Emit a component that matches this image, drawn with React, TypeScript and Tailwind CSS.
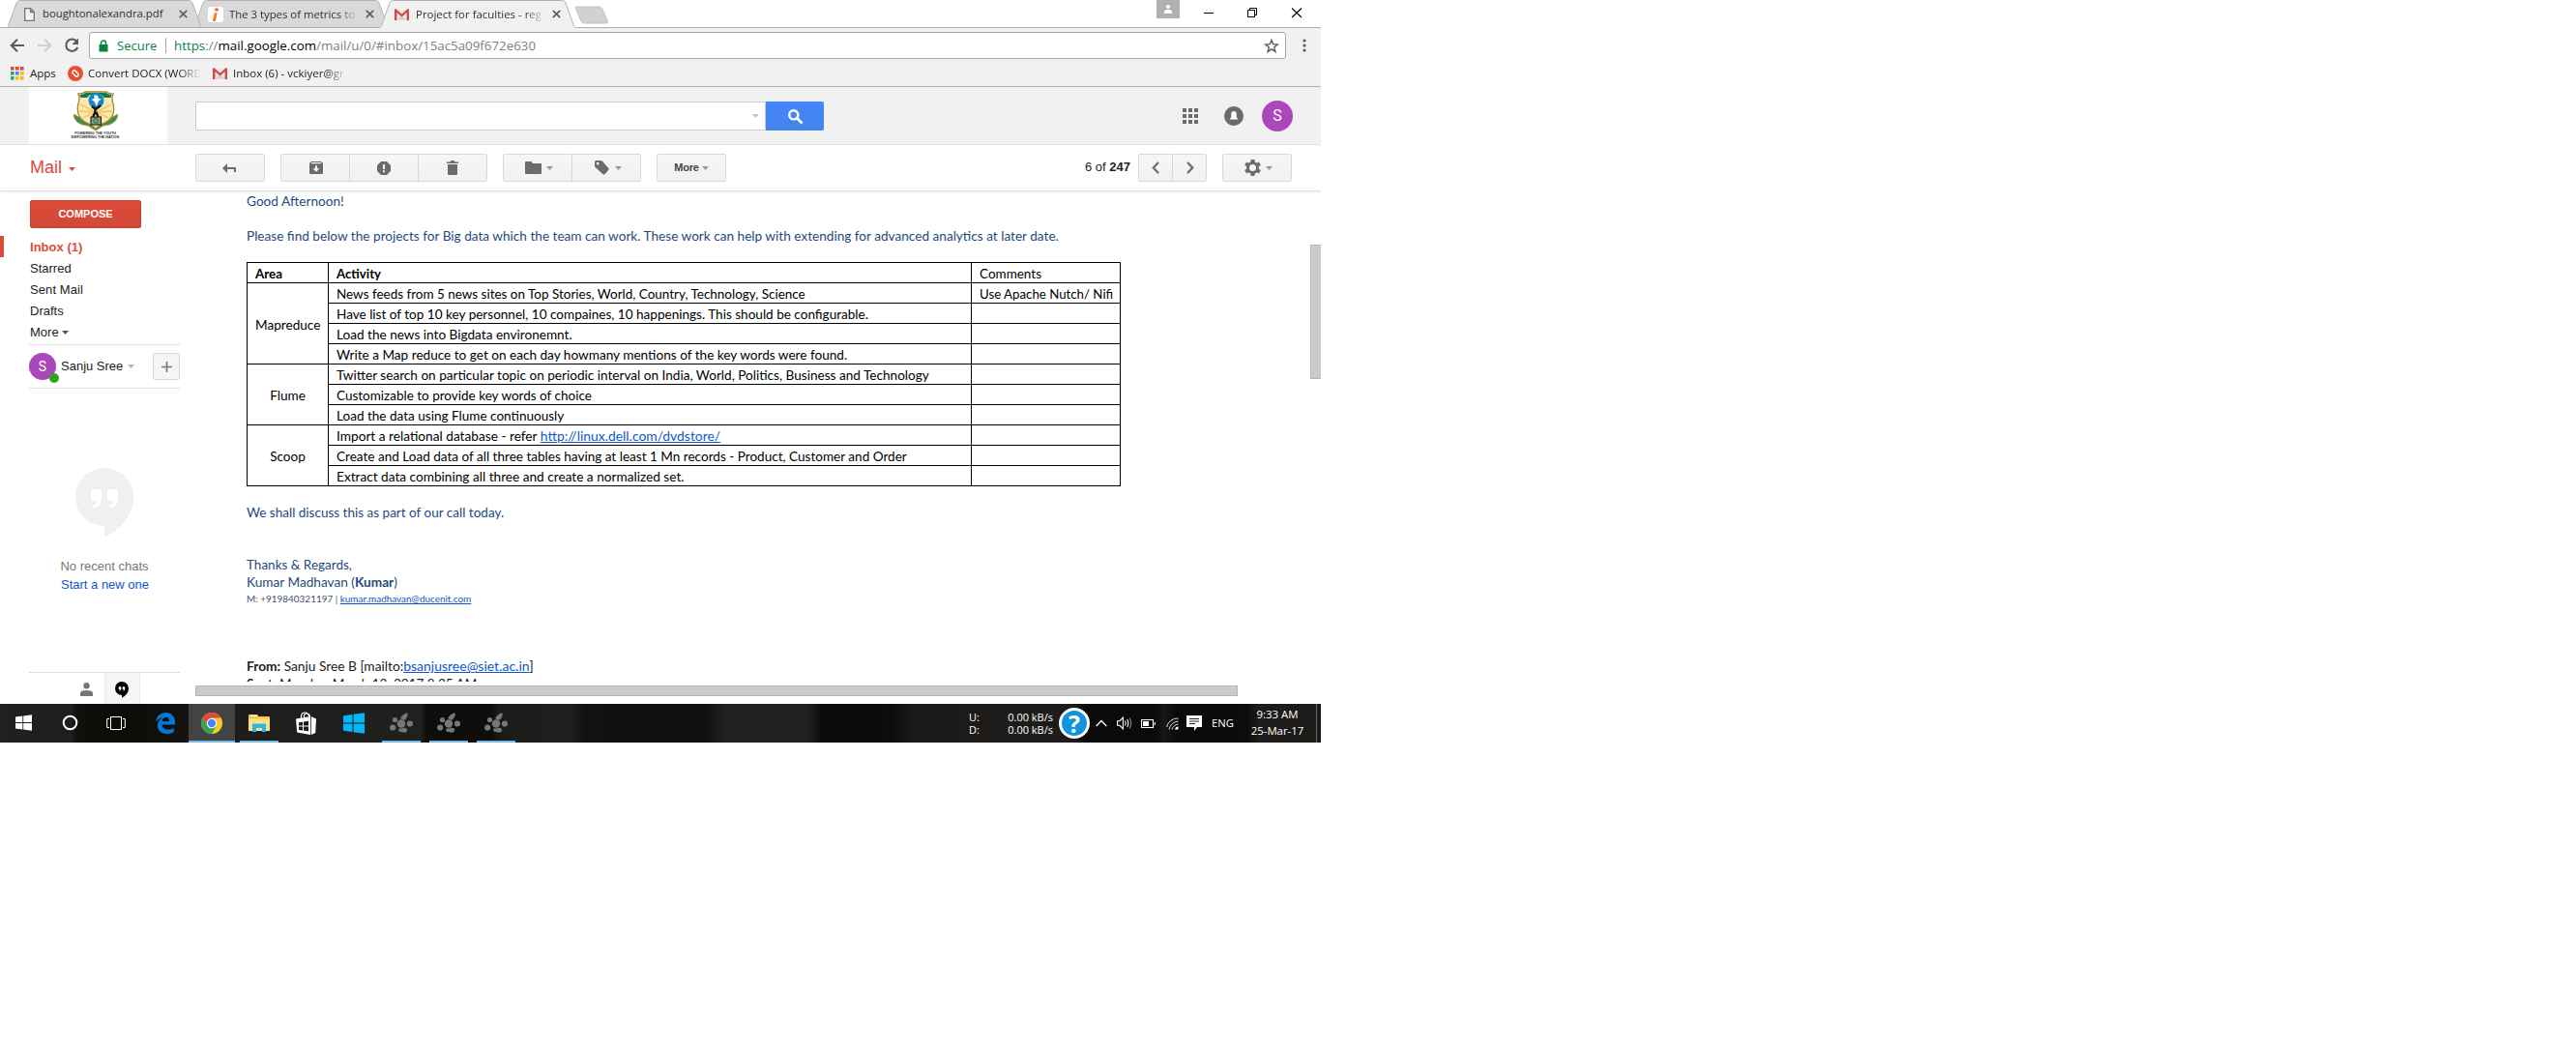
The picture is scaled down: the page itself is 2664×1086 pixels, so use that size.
import type { ReactNode } from "react";

const UI = "font-['Open_Sans',sans-serif]";

/* ---------- Browser chrome ---------- */

function GmailMark() {
  return (
    <svg width="15" height="12" viewBox="0 0 15 12">
      <rect x="0.5" y="0.5" width="14" height="11" fill="#e9e9e9" />
      <path d="M3 11.5 7.5 7 12 11.5z" fill="#d0d0d0" />
      <path d="M0 12V1.2Q0 0 1.2 0L7.5 5.5 13.8 0Q15 0 15 1.2V12H12.6V4L7.5 8.4 2.4 4V12z" fill="#d54b3d" />
    </svg>
  );
}

function Tab({ title, icon, active, className, size }: { title: string; icon: ReactNode; active?: boolean; className: string; size: string }) {
  return (
    <div className={`relative h-[29px] w-[206px] shrink-0 ${className}`}>
      <svg className="absolute inset-0" width="206" height="29" viewBox="0 0 206 29">
        <path
          d="M0 29C2 29 3 28 3.6 26.500L12 3Q13 .5 15.500 .5H190.500Q193 .5 194 3L202.400 26.500C203 28 204 29 206 29"
          fill={active ? "#f1f1f1" : "#d9d9d9"}
          stroke="#b3b3b3"
        />
        {!active && <path d="M0 28.500H206" stroke="#b0b0b0" />}
      </svg>
      <div className="relative flex h-[29px] items-center pl-[17px]">
        <div className="flex w-[22px] items-center">{icon}</div>
        <div className={`${UI} ${size} w-[133px] whitespace-nowrap text-[#303030] [mask-image:linear-gradient(to_right,#000_85%,transparent)]`}>
          {title}
        </div>
        <svg className="ml-[8px]" width="9" height="9" viewBox="0 0 9 9">
          <path d="M.8.8 8.200 8.200M8.200.8.8 8.200" stroke="#5f5f5f" strokeWidth="1.700" />
        </svg>
      </div>
    </div>
  );
}

function TabStrip() {
  return (
    <div className="relative flex h-[29px] items-start border-b border-[#b0b0b0] bg-white pl-[5px]">
      <Tab
        title="boughtonalexandra.pdf"
        size="text-[11.3px]"
        className="z-20 [&_div]:[mask-image:none]"
        icon={
          <svg className="ml-[3px]" width="11" height="14" viewBox="0 0 11 14">
            <path d="M.7.700H6.500L10.300 4.500V13.300H.7zM6.500.7V4.500H10.300" fill="#f4f4f4" stroke="#757575" strokeWidth="1.300" />
          </svg>
        }
      />
      <Tab
        title="The 3 types of metrics to"
        size="text-[11.35px]"
        className="z-10 -ml-[13px]"
        icon={
          <svg width="16" height="16" viewBox="0 0 16 16">
            <rect width="16" height="16" rx="3" fill="#fff" />
            <path d="M6.700 6.200H9.600L7.800 15H4.900z" fill="#f47b20" />
            <path d="M9 .8V5M6.900 2 11 3.900M11 1.900 7 3.900" stroke="#f05a28" strokeWidth="1" />
          </svg>
        }
      />
      <Tab title="Project for faculties - reg" size="text-[11.45px]" className="z-30 -ml-[13px]" active icon={<GmailMark />} />
      <svg className="-ml-[3px] mt-[6px]" width="36" height="20" viewBox="0 0 36 20">
        <path d="M1.500 3Q.8 1 3 1H25.500Q28 1 28.800 3L34.500 16Q35 18 33 18H10.500Q8 18 7 16z" fill="#d1d1d1" stroke="#c2c2c2" />
      </svg>
      <div className="ml-auto flex">
        <div className="flex h-[19px] w-[24px] items-center justify-center bg-[#b1b1b1]">
          <svg width="8" height="9" viewBox="0 0 8 9">
            <circle cx="4" cy="2" r="2" fill="#fff" />
            <path d="M0 9V7Q0 5 4 5T8 7V9z" fill="#fff" />
          </svg>
        </div>
        <svg className="mt-[7px] mr-[19px] ml-[25px]" width="102" height="12" viewBox="0 0 102 12">
          <path d="M0 6.500H10" stroke="#000" />
          <path d="M45.500 3.500H52.500V10.500H45.500zM47.500 3.500V1.500H54.500V8.500H52.500" fill="none" stroke="#000" />
          <path d="M91 1.500 101 11M101 1.500 91 11" stroke="#000" strokeWidth="1.100" />
        </svg>
      </div>
    </div>
  );
}

function AddressBar() {
  return (
    <div className="flex h-[34px] items-center pt-[2px] pl-[10px]">
      <svg width="17" height="16" viewBox="0 0 17 16">
        <path d="M15 8H2M8 1.700 1.700 8 8 14.300" fill="none" stroke="#5a5a5a" strokeWidth="2" />
      </svg>
      <svg className="ml-[12px]" width="16" height="16" viewBox="0 0 16 16">
        <path d="M0 8H13M7 1.700 13.300 8 7 14.300" fill="none" stroke="#cfcfcf" strokeWidth="2" />
      </svg>
      <svg className="ml-[11px]" width="17" height="16" viewBox="0 0 17 16">
        <path d="M13.500 4A6.200 6.200 0 1 0 14.300 10" fill="none" stroke="#5a5a5a" strokeWidth="2.100" />
        <path d="M15 .5V7H8.500z" fill="#5a5a5a" />
      </svg>
      <div className="ml-[9px] flex h-[28px] w-[1238px] items-center rounded-[3px] border border-[#a9a9a9] bg-white pl-[9px]">
        <svg width="10" height="13" viewBox="0 0 10 13">
          <path d="M2.500 6V3.500A2.500 2.500 0 0 1 7.500 3.500V6" fill="none" stroke="#0b8043" strokeWidth="1.500" />
          <rect x=".5" y="5" width="9" height="7.500" rx=".6" fill="#0b8043" />
        </svg>
        <div className={`${UI} ml-[9px] w-[50px] text-[13px] leading-[26px] text-[#0b8043]`}>Secure</div>
        <div className="h-[16px] w-px bg-[#a8a8a8]" />
        <div className={`${UI} ml-[8px] text-[13.33px] leading-[26px] whitespace-nowrap text-[#808080]`}>
          <span className="text-[#0b8043]">https</span>://<span className="text-black">mail.google.com</span>/mail/u/0/#inbox/15ac5a09f672e630
        </div>
        <svg className="mr-[6px] ml-auto" width="16" height="15" viewBox="0 0 16 15">
          <path d="M8 1.500 9.700 5.700 14.200 6 10.700 8.900 11.900 13.400 8 10.900 4.100 13.400 5.300 8.900 1.800 6 6.300 5.700z" fill="none" stroke="#5a5a5a" strokeWidth="1.400" />
        </svg>
      </div>
      <svg className="ml-[17px]" width="4" height="14" viewBox="0 0 4 14">
        <circle cx="2" cy="2" r="1.600" fill="#5a5a5a" />
        <circle cx="2" cy="7" r="1.600" fill="#5a5a5a" />
        <circle cx="2" cy="12" r="1.600" fill="#5a5a5a" />
      </svg>
    </div>
  );
}

const APP_DOTS = ["#ea4335", "#ea4335", "#ea4335", "#34a853", "#4285f4", "#fbbc05", "#34a853", "#fbbc05", "#fbbc05"];

function Bookmarks() {
  return (
    <div className={`${UI} flex h-[27px] items-center border-b border-[#b4b4b4] pb-[1px] pl-[11px] text-[11.5px] whitespace-nowrap text-[#222]`}>
      <svg width="14" height="14" viewBox="0 0 14 14">
        {APP_DOTS.map((c, i) => (
          <rect key={i} x={(i % 3) * 5} y={Math.floor(i / 3) * 5} width="3.600" height="3.600" fill={c} />
        ))}
      </svg>
      <span className="ml-[6px] w-[39px]">Apps</span>
      <svg width="16" height="16" viewBox="0 0 16 16">
        <circle cx="8" cy="8" r="8" fill="#e8502f" />
        <path d="M7.300 9.800 5.200 7.800Q4.300 6.500 5.500 5.300 6.800 4.300 8 5.300L9 6.300M8.700 6.200 10.800 8.200Q11.700 9.500 10.500 10.700 9.200 11.700 8 10.700L7 9.700" fill="none" stroke="#fff" strokeWidth="1.500" />
      </svg>
      <span className="ml-[5px] w-[117px] text-[11.5px] [mask-image:linear-gradient(to_right,#000_80%,transparent)]">Convert DOCX (WORD</span>
      <span className="ml-[12px]">
        <GmailMark />
      </span>
      <span className="ml-[6px] w-[117px] [mask-image:linear-gradient(to_right,#000_83%,transparent)]">Inbox (6) - vckiyer@gr</span>
    </div>
  );
}

/* ---------- Gmail header and toolbar ---------- */

function Crest() {
  return (
    <svg width="48" height="42" viewBox="0 0 48 42">
      <path d="M1 24Q2 35 16 36L24 41 32 36Q46 35 47 24L41 27H7z" fill="#3f8f4a" stroke="#b9973c" strokeWidth=".8" />
      <path d="M6 3Q11 3 13 1H35Q37 3 42 3 40 8 42 13 45 26 35 32 28 35 24 39 20 35 13 32 3 26 6 13 8 8 6 3z" fill="#fbe9b4" stroke="#a58a35" strokeWidth="1.300" />
      <path d="M7.500 4Q11.500 4 13.500 2H34.500Q36.500 4 40.500 4L39.500 7H33L30 4H18L15 7H8.500z" fill="#157a4b" />
      <path d="M24 22 8 14M24 22 7 21M24 22 10 28M24 22 40 14M24 22 41 21M24 22 38 28" stroke="#f7c765" strokeWidth="1.800" />
      <circle cx="24.500" cy="10" r="8" fill="#1388cf" />
      <path d="M22.500 4 26 5 27 8 30 8.500 27 10.500 25 16 22.500 11 19.500 9 22.500 8z" fill="#fff" />
      <path d="M20 16 24 19 29 15M24 18 23 23 21 27M24.500 22 26.500 27" fill="none" stroke="#111" strokeWidth="2.300" />
      <rect x="19" y="27" width="10.500" height="8" fill="#8c9a86" stroke="#1a1a1a" strokeWidth="1.100" />
      <circle cx="24.200" cy="31" r="2.300" fill="none" stroke="#206b35" />
    </svg>
  );
}

function Header() {
  return (
    <div className="flex h-[60px] items-start border-b border-[#e2e2e2] bg-[#f1f1f1]">
      <div className="ml-[30px] flex h-[59px] w-[143px] flex-col items-center bg-white pt-[4px] pr-[6px]">
        <Crest />
        <div className="w-[80px] text-center font-['Liberation_Sans'] text-[3.7px] leading-[4px] font-bold text-[#333]">
          POWERING THE YOUTH
          <br />
          EMPOWERING THE NATION
        </div>
      </div>
      <div className="mt-[15px] ml-[29px] flex h-[30px] w-[590px] items-center justify-end border border-[#cbcbcb] bg-white pr-[6px]">
        <Caret className="text-[#c3c3c3]" />
      </div>
      <div className="mt-[15px] flex h-[30px] w-[60px] items-center justify-center rounded-r-[2px] bg-[linear-gradient(#4387fd,#4683ea)]">
        <svg width="17" height="17" viewBox="0 0 17 17">
          <circle cx="6.800" cy="6.800" r="4.600" fill="none" stroke="#fff" strokeWidth="2.400" />
          <path d="M10 10 15.500 15.500" stroke="#fff" strokeWidth="2.800" />
        </svg>
      </div>
      <div className="mt-[14px] ml-auto flex h-[32px] items-center pr-[29px]">
        <svg width="16" height="16" viewBox="0 0 16 16" fill="#6b6b6b">
          {[0, 6, 12].map((y) => [0, 6, 12].map((x) => <rect key={`${x}-${y}`} x={x} y={y} width="4" height="4" />))}
        </svg>
        <svg className="ml-[27px]" width="20" height="20" viewBox="0 0 20 20">
          <circle cx="10" cy="10" r="10" fill="#6b6b6b" />
          <path d="M10 5Q7.200 5.300 7.200 8.500V11.500L5.800 13V13.500H14.200V13L12.800 11.500V8.500Q12.800 5.300 10 5z" fill="#fff" />
        </svg>
        <div className="ml-[19px] flex size-[32px] items-center justify-center rounded-full bg-[#ab47bc] font-['Roboto'] text-[16px] text-white">S</div>
      </div>
    </div>
  );
}

function Caret({ className = "" }: { className?: string }) {
  return (
    <svg className={className} width="7" height="4" viewBox="0 0 7 4">
      <path d="M0 0H7L3.500 4z" fill="currentColor" />
    </svg>
  );
}

const BTN = "flex h-[29px] items-center justify-center border border-[#d9d9d9] bg-[linear-gradient(#f6f6f6,#f1f1f1)] text-[#6b6b6b]";

function Toolbar() {
  return (
    <div className="relative z-10 flex h-[48px] items-start border-b border-[#dedede] bg-white pt-[9px] font-['Liberation_Sans',sans-serif] shadow-[0_1px_2px_rgba(0,0,0,0.06)]">
      <div className="ml-[31px] flex h-[29px] w-[171px] items-center text-[18px] text-[#dd4b39]">
        Mail
        <Caret className="mt-[2px] ml-[7px]" />
      </div>
      <div className={`${BTN} w-[72px] rounded-[2px]`}>
        <svg className="mr-[2px]" width="14" height="10" viewBox="0 0 14 10">
          <path d="M5 0V4H14V9H12V6H5V10L0 5z" fill="currentColor" />
        </svg>
      </div>
      <div className={`${BTN} ml-[16px] w-[72px] rounded-l-[2px]`}>
        <svg className="ml-[2px]" width="14" height="13" viewBox="0 0 14 13">
          <path d="M2 0H12L14 2V12Q14 13 13 13H1Q0 13 0 12V2z" fill="currentColor" />
          <path d="M2 1.600H12M7 4.500V9" stroke="#f2f2f2" strokeWidth="1.200" />
          <path d="M6 4.500H8V7.300H10.500L7 10.700 3.500 7.300H6z" fill="#f4f4f4" />
        </svg>
      </div>
      <div className={`${BTN} -ml-px w-[72px]`}>
        <svg width="14" height="14" viewBox="0 0 14 14">
          <path d="M4.100 0H9.900L14 4.100V9.900L9.900 14H4.100L0 9.900V4.100z" fill="currentColor" />
          <path d="M7 3V8M7 9.300V11.300" stroke="#f4f4f4" strokeWidth="2" />
        </svg>
      </div>
      <div className={`${BTN} -ml-px w-[72px] rounded-r-[2px]`}>
        <svg width="12" height="15" viewBox="0 0 12 15">
          <path d="M0 1.500H3.500L4.500 0H7.500L8.500 1.500H12V3H0zM1 4H11V14Q11 15 10 15H2Q1 15 1 14z" fill="currentColor" />
        </svg>
      </div>
      <div className={`${BTN} ml-[16px] w-[72px] rounded-l-[2px]`}>
        <svg className="ml-[3px]" width="17" height="13" viewBox="0 0 17 13">
          <path d="M1 0H6.500L8 2H16Q17 2 17 3V12Q17 13 16 13H1Q0 13 0 12V1Q0 0 1 0z" fill="currentColor" />
        </svg>
        <Caret className="ml-[5px] text-[#999]" />
      </div>
      <div className={`${BTN} -ml-px w-[72px] rounded-r-[2px]`}>
        <svg className="ml-[3px]" width="15" height="15" viewBox="0 0 15 15">
          <path fillRule="evenodd" d="M0 1.500Q0 0 1.500 0H6.500L8 .7 14.300 8Q15 9 14.300 9.700L10.500 14.300Q9.500 15.200 8.600 14.300L.6 7Q0 6.300 0 5.500zM3.200 1.800A1.400 1.400 0 1 0 3.200 4.600 1.400 1.400 0 1 0 3.200 1.800z" fill="currentColor" />
        </svg>
        <Caret className="ml-[6px] text-[#999]" />
      </div>
      <div className={`${BTN} ml-[16px] w-[72px] rounded-[2px] text-[11px] font-bold`}>
        <span className="tracking-[-0.2px] text-[#444]">More</span>
        <Caret className="ml-[3px] text-[#999]" />
      </div>
      <div className="ml-auto flex">
        <div className="mr-[8px] text-[13px] leading-[27px] text-[#222]">
          6 of <b>247</b>
        </div>
        <div className={`${BTN} w-[36px] rounded-l-[2px]`}>
          <svg width="8" height="13" viewBox="0 0 8 13">
            <path d="M7 1 1.700 6.500 7 12" fill="none" stroke="currentColor" strokeWidth="2.200" />
          </svg>
        </div>
        <div className={`${BTN} -ml-px w-[36px] rounded-r-[2px]`}>
          <svg className="ml-[1px]" width="8" height="13" viewBox="0 0 8 13">
            <path d="M1 1 6.300 6.500 1 12" fill="none" stroke="currentColor" strokeWidth="2.200" />
          </svg>
        </div>
        <div className={`${BTN} mr-[30px] ml-[16px] w-[72px] rounded-[2px]`}>
          <svg className="ml-[2px]" width="17" height="17" viewBox="0 0 17 17">
            <circle cx="8.500" cy="8.500" r="5" fill="none" stroke="currentColor" strokeWidth="3" />
            {[0, 60, 120, 180, 240, 300].map((a) => (
              <rect key={a} x="6.500" y="0" width="4" height="3.500" fill="currentColor" transform={`rotate(${a} 8.500 8.500)`} />
            ))}
          </svg>
          <Caret className="ml-[5px] text-[#999]" />
        </div>
      </div>
    </div>
  );
}

/* ---------- Sidebar ---------- */

function Hangouts({ size, fill, quote }: { size: number; fill: string; quote: string }) {
  return (
    <svg width={size} height={size * 1.2} viewBox="0 0 60 72">
      <path d="M30 0A30 30 0 1 0 30 60V72Q60 56 60 30A30 30 0 0 0 30 0z" fill={fill} />
      <path d="M18 22H25Q27 22 27 24V32Q27 41 18 41V38Q22 38 22 34H18Q16 34 16 32V24Q16 22 18 22zM35 22H42Q44 22 44 24V32Q44 41 35 41V38Q39 38 39 34H35Q33 34 33 32V24Q33 22 35 22z" fill={quote} />
    </svg>
  );
}

function Sidebar() {
  return (
    <div className="flex h-[530px] w-[202px] shrink-0 flex-col font-['Liberation_Sans',sans-serif] text-[13px] text-[#222]">
      <div className="mt-[9px] ml-[31px] flex h-[29px] w-[115px] items-center justify-center rounded-[2px] border border-[#c9402f] bg-[linear-gradient(#dd4b39,#d14836)] text-[11px] font-bold text-white">
        COMPOSE
      </div>
      <div className="mt-[8px] flex h-[22px] items-center border-l-[4px] border-[#dd4b39] pt-[1px] pl-[27px] font-bold tracking-[0.020px] text-[#dd4b39]">Inbox (1)</div>
      <div className="mt-[1px] flex flex-col pl-[31px] leading-[22px]">
        <div>Starred</div>
        <div className="tracking-[0.090px]">Sent Mail</div>
        <div>Drafts</div>
        <div className="flex h-[21px] items-center leading-[21px]">
          More
          <Caret className="ml-[3px] text-[#555]" />
        </div>
      </div>
      <div className="mt-[2px] ml-[30px] flex h-[46px] w-[156px] items-center border-y border-[#e2e2e2]">
        <div className="relative flex size-[28px] items-center justify-center rounded-full bg-[#ab47bc] font-['Roboto'] text-[14px] text-white">
          S
          <div className="absolute -right-[3px] -bottom-[3px] size-[10px] rounded-full bg-[#2fa71c]" />
        </div>
        <span className="ml-[5px]">Sanju Sree</span>
        <Caret className="ml-[5px] text-[#b5b5b5]" />
        <div className="ml-auto flex size-[28px] items-center justify-center rounded-[2px] border border-[#d9d9d9] bg-[#f5f5f5]">
          <svg width="11" height="11" viewBox="0 0 11 11">
            <path d="M5.500 0V11M0 5.500H11" stroke="#777" strokeWidth="1.600" />
          </svg>
        </div>
      </div>
      <div className="mt-[82px] ml-[30px] flex w-[156px] flex-col items-center leading-[19px]">
        <Hangouts size={60} fill="#f0f0f0" quote="#fff" />
        <div className="mt-[20px] text-[#777]">No recent chats</div>
        <div className="ml-[1px] text-[#15c]">Start a new one</div>
      </div>
      <div className="mt-auto ml-[30px] flex h-[33px] w-[156px] border-t border-[#dedede]">
        <svg className="mt-[10px] ml-[53px]" width="13" height="14" viewBox="0 0 13 14">
          <circle cx="6.500" cy="3.300" r="3.200" fill="#777" />
          <path d="M0 14V11Q0 8 6.500 8T13 11V14z" fill="#777" />
        </svg>
        <div className="ml-[12px] flex w-[37px] justify-center border-x border-[#ebebeb] bg-[#f6f6f6] pt-[9px] pr-[1px]">
          <Hangouts size={14} fill="#000" quote="#fff" />
        </div>
      </div>
    </div>
  );
}

/* ---------- Message ---------- */

type Row = { area?: string; span?: number; text: ReactNode; note?: string; size?: string };

const ROWS: Row[] = [
  { area: "Mapreduce", span: 4, text: "News feeds from 5 news sites on Top Stories, World, Country, Technology, Science", note: "Use Apache Nutch/ Nifi", size: "text-[13.48px]" },
  { text: "Have list of top 10 key personnel, 10 compaines, 10 happenings. This should be configurable.", size: "text-[13.55px]" },
  { text: "Load the news into Bigdata environemnt.", size: "text-[13.6px]" },
  { text: "Write a Map reduce to get on each day howmany mentions of the key words were found.", size: "text-[13.6px]" },
  { area: "Flume", span: 3, text: "Twitter search on particular topic on periodic interval on India, World, Politics, Business and Technology", size: "text-[13.6px]" },
  { text: "Customizable to provide key words of choice", size: "text-[13.5px]" },
  { text: "Load the data using Flume continuously", size: "text-[13.55px]" },
  {
    area: "Scoop",
    span: 3,
    text: (
      <>
        Import a relational database - refer <a className="text-[13.9px] text-[#15c] underline">http://linux.dell.com/dvdstore/</a>
      </>
    ),
    size: "text-[13.68px]",
  },
  { text: "Create and Load data of all three tables having at least 1 Mn records - Product, Customer and Order", size: "text-[13.55px]" },
  { text: "Extract data combining all three and create a normalized set.", size: "text-[13.65px]" },
];

const CELL = "h-[21px] border border-black px-[8px] pt-[2px] pb-0 leading-[18px] whitespace-nowrap";

function Message() {
  return (
    <div className="h-[507px] w-[1153px] overflow-hidden pt-[1px] pl-[53px] font-['Lato',sans-serif] text-[13.5px] leading-[18px] text-[#1f497d]">
      <p className="text-[13.65px]">Good Afternoon!</p>
      <p className="mt-[18px] text-[13.61px] whitespace-nowrap">
        Please find below the projects for Big data which the team can work. These work can help with extending for advanced analytics at later date.
      </p>
      <table className="mt-[18px] w-[903px] table-fixed border-collapse text-black">
        <colgroup>
          <col className="w-[84px]" />
          <col className="w-[665px]" />
          <col className="w-[154px]" />
        </colgroup>
        <tbody>
          <tr>
            <td className={`${CELL} text-[13.35px] font-bold`}>Area</td>
            <td className={`${CELL} text-[13.2px] font-bold`}>Activity</td>
            <td className={CELL}>Comments</td>
          </tr>
          {ROWS.map((r, i) => (
            <tr key={i}>
              {r.area && (
                <td rowSpan={r.span} className={`${CELL} text-center text-[13.6px]`}>
                  {r.area}
                </td>
              )}
              <td className={`${CELL} ${r.size}`}>{r.text}</td>
              <td className={`${CELL} text-[13.25px]`}>{r.note}</td>
            </tr>
          ))}
        </tbody>
      </table>
      <p className="mt-[18px] text-[13.53px]">We shall discuss this as part of our call today.</p>
      <p className="mt-[36px]">Thanks &amp; Regards,</p>
      <p className="text-[13.65px]">
        Kumar Madhavan (<b>Kumar</b>)
      </p>
      <p className="text-[9.950px] leading-[16px] text-[#44546a]">
        M: +919840321197 | <a className="text-[#15c] underline">kumar.madhavan@ducenit.com</a>
      </p>
      <p className="mt-[53px] text-[13.75px] text-[#222]">
        <b>From:</b> Sanju Sree B [mailto:<a className="text-[14px] text-[#15c] underline">bsanjusree@siet.ac.in</a>]
      </p>
      <p className="text-[13.5px] text-[#222]">
        <b>Sent:</b> Monday, March 13, 2017 8:35 AM
      </p>
    </div>
  );
}

function Content() {
  return (
    <div className="flex h-[530px]">
      <Sidebar />
      <div className="flex w-[1153px] flex-col">
        <Message />
        <div className="mt-[4px] h-[11px] w-[1078px] border border-[#b5b5b5] bg-[#cbcbcb]" />
      </div>
      <div className="mt-[55px] h-[139px] w-[11px] border border-r-0 border-[#b5b5b5] bg-[#cbcbcb]" />
    </div>
  );
}

/* ---------- Windows taskbar ---------- */

function Slot({ children, line, active, wide }: { children: ReactNode; line?: boolean; active?: boolean; wide?: boolean }) {
  return (
    <div className={`flex h-[40px] flex-col items-center ${wide ? "w-[49px]" : "w-[48px]"} ${active ? "bg-[#434343]" : ""}`}>
      <div className="flex h-[38px] items-center pt-[1px]">{children}</div>
      {line && <div className={`h-[2px] bg-[#76b9ed] ${active ? "w-full" : "w-[40px]"}`} />}
    </div>
  );
}

function WinLogo({ size, color }: { size: number; color: string }) {
  return (
    <svg width={size} height={size} viewBox="0 0 22 22">
      <path d="M0 3.300 9.500 2V10.400H0zM10.600 1.800 22 .2V10.400H10.600zM0 11.500H9.500V20L0 18.700zM10.600 11.500H22V21.800L10.600 20.200z" fill={color} />
    </svg>
  );
}

function Blob() {
  return (
    <svg width="24" height="21" viewBox="0 0 24 21" fill="#777">
      <circle cx="12" cy="11.500" r="4.200" />
      <circle cx="3.200" cy="15.500" r="3.100" />
      <circle cx="5.500" cy="7.500" r="2.600" />
      <circle cx="21" cy="11.500" r="3.100" />
      <ellipse cx="15" cy="18.200" rx="3" ry="2.400" />
      <path d="M11 6Q14 1 18 .5 19.500 1 18.500 3 18 6 15 8z" />
      <path d="M9 17 12 16 13 20 10 20z" />
    </svg>
  );
}

function Taskbar() {
  return (
    <div className={`${UI} flex h-[40px] items-center bg-[linear-gradient(to_right,#202020_0,#1e1e1e_74px,#100f0c_80px,#0e0c09_130px,#15130f_190px,#1d1d1c_250px,#20201f_435px,#0f0e0d_441px,#0e0d0c_508px,#1b1b1a_516px,#1f1f1e_590px,#121110_605px,#11100f_730px,#22211f_750px,#22211f_835px,#0c0b0a_850px,#0d0c0b_920px,#1b1a19_945px,#1e1d1c_1110px,#0b0a08_1122px,#0b0a08_1195px,#181817_1204px,#0c0b0a_1216px,#0d0c0b_1290px,#1d1c1b_1302px,#1c1b1a_1366px)] text-white`}>
      <Slot>
        <WinLogo size={17} color="#fff" />
      </Slot>
      <Slot>
        <svg width="17" height="17" viewBox="0 0 17 17">
          <circle cx="8.500" cy="8.500" r="6.800" fill="none" stroke="#fff" strokeWidth="2" />
        </svg>
      </Slot>
      <Slot>
        <svg width="20" height="14" viewBox="0 0 20 14">
          <path d="M4.500.5H15.500V13.500H4.500zM3 2.500H.7V11.500H3M17 2.500H19.300V11.500H17" fill="none" stroke="#fff" />
        </svg>
      </Slot>
      <div className="w-[2px]" />
      <Slot wide>
        <svg width="20" height="22" viewBox="0 0 20 22">
          <path d="M0 9.500C1 3.500 5 0 10.500 0 16.500 0 20 4.500 20 10V12.500H6.500C6.800 16 9.500 17.600 12.500 17.600 15 17.600 17 17 18.800 15.900V20.200C16.800 21.400 14.300 22 11.500 22 5.500 22 1.900 18.300 1.900 13.500 1.900 10 3.800 7.200 7.300 5.300 4.300 5.800 1.700 7.200 0 9.500zM6.600 9H13.900C14 6.300 12.600 4.600 10.500 4.800 8.500 5 7 6.700 6.600 9z" fill="#0078d7" />
        </svg>
      </Slot>
      <Slot line active>
        <svg width="22" height="22" viewBox="0 0 22 22">
          <circle cx="11" cy="11" r="11" fill="#fbc926" />
          <path d="M1.470 5.500A11 11 0 0 1 20.530 5.500H11L6.240 13.750z" fill="#dd4b3e" />
          <path d="M1.470 5.500A11 11 0 0 0 11 22L15.760 13.750 11 16.500 6.240 13.750z" fill="#35a353" />
          <circle cx="11" cy="11" r="5.300" fill="#fff" />
          <circle cx="11" cy="11" r="4.200" fill="#4a86f7" />
        </svg>
      </Slot>
      <Slot wide line>
        <svg width="22" height="18" viewBox="0 0 22 18">
          <path d="M0 1Q0 0 1 0H9L10.500 2H21Q22 2 22 3V17H0z" fill="#f5c84b" />
          <path d="M0 4.500H22V17H0z" fill="#fde08a" />
          <path d="M2 .8H9V2H2z" fill="#dff3fb" />
          <path d="M4 18V10.500Q4 9.500 5 9.500H17Q18 9.500 18 10.500V18H14V14H8V18z" fill="#29b6e8" />
        </svg>
      </Slot>
      <Slot wide>
        <svg width="21" height="24" viewBox="0 0 21 24">
          <path d="M5.500 7V4.500Q6 1 9.500 1T13.500 5M8.500 6V3.500Q9 2 11.500 2T14.500 5" fill="none" stroke="#fff" strokeWidth="1.200" />
          <path d="M0 7.500 15 5V24L1.200 21.500zM15.800 5 21 7.500 20.200 22 15.800 24z" fill="#fff" />
          <path d="M3 11.300 7 10.700V14.500H3zM8 10.500 13 9.800V14.500H8zM3 15.500H7V19.500L3 18.900zM8 15.500H13V20.300L8 19.600z" fill="#1b1b1b" />
        </svg>
      </Slot>
      <Slot wide>
        <WinLogo size={22} color="#00b8f5" />
      </Slot>
      <Slot wide line>
        <Blob />
      </Slot>
      <Slot wide line>
        <Blob />
      </Slot>
      <Slot wide line>
        <Blob />
      </Slot>
      <div className="ml-auto flex items-center">
        <div className="flex w-[87px] flex-col text-[11px] leading-[13px]">
          <div className="flex justify-between">
            <span>U:</span>
            <span>0.00 kB/s</span>
          </div>
          <div className="flex justify-between">
            <span>D:</span>
            <span>0.00 kB/s</span>
          </div>
        </div>
        <div className="ml-[6px] flex size-[32px] items-center justify-center rounded-full border-[3px] border-white bg-[#1095dc] text-[25px] leading-none font-bold">?</div>
        <svg className="ml-[6px]" width="12" height="8" viewBox="0 0 12 8">
          <path d="M.7 7 6 1.500 11.300 7" fill="none" stroke="#fff" strokeWidth="1.300" />
        </svg>
        <svg className="ml-[10px]" width="17" height="14" viewBox="0 0 17 14">
          <path d="M.6 4.700H3L6.400 1.200V12.800L3 9.300H.6z" fill="none" stroke="#fff" strokeWidth="1.100" />
          <path d="M8.500 4.500Q10 7 8.500 9.500M10.700 3Q13 7 10.700 11" fill="none" stroke="#fff" strokeWidth="1.100" />
          <path d="M13 1.500Q16.500 7 13 12.500" fill="none" stroke="#888" strokeWidth="1.100" />
        </svg>
        <svg className="ml-[8px]" width="15" height="9" viewBox="0 0 15 9">
          <path d="M.5.5H12.500V8.500H.5zM14.300 3V6" fill="none" stroke="#fff" strokeWidth="1.100" />
          <path d="M2 2H8V7H2z" fill="#fff" />
        </svg>
        <svg className="ml-[11px]" width="13" height="13" viewBox="0 0 13 13">
          <path d="M.7 10A11 11 0 0 1 12.500 1M3 12.500A11 11 0 0 1 12.500 4M6 12.500A8 8 0 0 1 12.500 7" fill="none" stroke="#ddd" strokeWidth="1" />
          <path d="M9 12.500Q9.500 9.500 12.500 9.500V12.500z" fill="#fff" />
        </svg>
        <svg className="ml-[8px]" width="16" height="16" viewBox="0 0 16 16">
          <path d="M0 0H16V12H11L8 16V12H0z" fill="#fff" />
          <path d="M3 3.500H13M3 6H13M3 8.500H9" stroke="#222" />
        </svg>
        <div className="ml-[10px] w-[24px] text-[11.300px]">ENG</div>
        <div className="ml-[12px] w-[64px] pb-[2px] text-center text-[11.400px] leading-[17px]">
          9:33 AM
          <br />
          25-Mar-17
        </div>
        <div className="mr-[4px] ml-[8px] h-[40px] w-px bg-[#6b6b6b]" />
      </div>
    </div>
  );
}

export default function App() {
  return (
    <div className="min-h-screen bg-white">
      <div className="h-[768px] w-[1366px] overflow-hidden bg-white">
        <div className="bg-[#f1f1f1]">
          <TabStrip />
          <AddressBar />
          <Bookmarks />
        </div>
        <Header />
        <Toolbar />
        <Content />
        <Taskbar />
      </div>
    </div>
  );
}
